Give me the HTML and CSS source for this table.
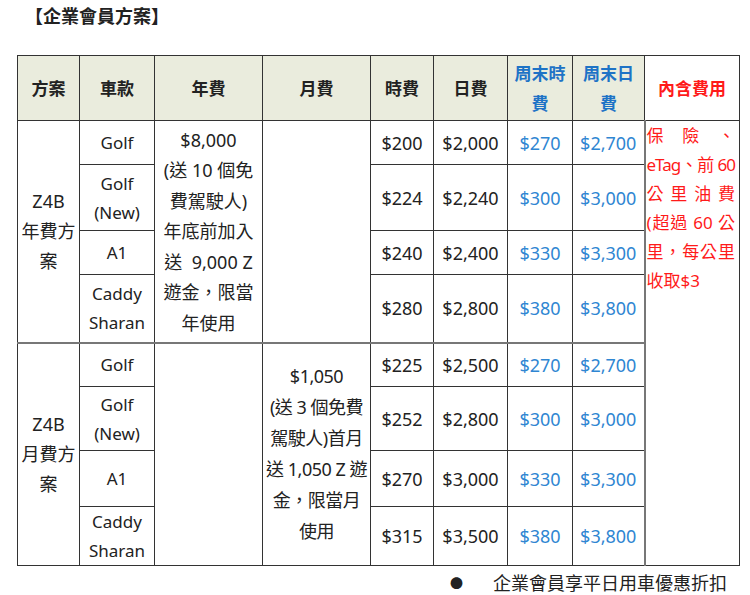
FILE: index.html
```html
<!DOCTYPE html>
<html lang="zh-Hant">
<head>
<meta charset="utf-8">
<link rel="stylesheet" href="styles.css">
</head>
<body>
<div class="page">
  <h1 class="title">【企業會員方案】</h1>
  <table class="plan">
    <colgroup>
      <col class="c1"><col class="c2"><col class="c3"><col class="c4"><col class="c5"><col class="c6"><col class="c7"><col class="c8"><col class="c9">
    </colgroup>
    <thead>
      <tr class="h">
        <th>方案</th><th>車款</th><th>年費</th><th>月費</th><th>時費</th><th>日費</th>
        <th class="blue">周末時<br>費</th><th class="blue">周末日<br>費</th><th class="red white">內含費用</th>
      </tr>
    </thead>
    <tbody>
      <tr class="r1">
        <td rowspan="4" class="plan-name">Z4B<br>年費方<br>案</td>
        <td class="car">Golf</td>
        <td rowspan="4" class="desc">$8,000<br>(送 10 個免<br>費駕駛人)<br>年底前加入<br>送&nbsp; 9,000 Z<br>遊金，限當<br>年使用</td>
        <td rowspan="4"></td>
        <td class="num">$200</td><td class="num">$2,000</td><td class="num blue">$270</td><td class="num blue">$2,700</td>
        <td rowspan="8" class="note">
          <span class="jl">保險、</span>
          <span class="jl tight">eTag、前 60</span>
          <span class="jl">公里油費</span>
          <span class="jl">(超過 60 公</span>
          <span class="jl">里，每公里</span>
          <span class="ll">收取$3</span>
        </td>
      </tr>
      <tr class="r2">
        <td class="car">Golf<br>(New)</td>
        <td class="num">$224</td><td class="num">$2,240</td><td class="num blue">$300</td><td class="num blue">$3,000</td>
      </tr>
      <tr class="r3">
        <td class="car">A1</td>
        <td class="num">$240</td><td class="num">$2,400</td><td class="num blue">$330</td><td class="num blue">$3,300</td>
      </tr>
      <tr class="r4">
        <td class="car">Caddy<br>Sharan</td>
        <td class="num">$280</td><td class="num">$2,800</td><td class="num blue">$380</td><td class="num blue">$3,800</td>
      </tr>
      <tr class="r5 group">
        <td rowspan="4" class="plan-name">Z4B<br>月費方<br>案</td>
        <td class="car">Golf</td>
        <td rowspan="4"></td>
        <td rowspan="4" class="desc month">$1,050<br>(送 3 個免費<br>駕駛人)首月<br>送 1,050 Z 遊<br>金，限當月<br>使用</td>
        <td class="num">$225</td><td class="num">$2,500</td><td class="num blue">$270</td><td class="num blue">$2,700</td>
      </tr>
      <tr class="r6">
        <td class="car">Golf<br>(New)</td>
        <td class="num">$252</td><td class="num">$2,800</td><td class="num blue">$300</td><td class="num blue">$3,000</td>
      </tr>
      <tr class="r7">
        <td class="car">A1</td>
        <td class="num">$270</td><td class="num">$3,000</td><td class="num blue">$330</td><td class="num blue">$3,300</td>
      </tr>
      <tr class="r8">
        <td class="car">Caddy<br>Sharan</td>
        <td class="num">$315</td><td class="num">$3,500</td><td class="num blue">$380</td><td class="num blue">$3,800</td>
      </tr>
    </tbody>
  </table>
  <div class="bullet-row"><span class="dot">●</span><span>企業會員享平日用車優惠折扣</span></div>
</div>
</body>
</html>
```
FILE: styles.css
```css
html, body {
  margin: 0;
  padding: 0;
  background: #fff;
}
body {
  font-family: "Noto Sans", "Noto Sans CJK TC", sans-serif;
  color: #222;
}
.page {
  padding: 0 0 0 17px;
}
.title {
  margin: 0;
  padding: 4px 0 0 8px;
  font-size: 18px;
  line-height: 22px;
  font-weight: bold;
  height: 55px;
  box-sizing: border-box;
  font-family: "Noto Sans CJK TC", sans-serif;
}
.plan {
  border-collapse: collapse;
  table-layout: fixed;
  width: 722px;
  font-size: 18px;
  line-height: 30px;
}
.c1 { width: 62px; }
.c2 { width: 75px; }
.c3 { width: 108px; }
.c4 { width: 108px; }
.c5 { width: 63px; }
.c6 { width: 74px; }
.c7 { width: 65px; }
.c8 { width: 72px; }
.c9 { width: 95px; }
.plan th, .plan td {
  border: 1px solid #333;
  padding: 0;
  text-align: center;
  vertical-align: middle;
}
.plan th {
  background: #eaecdd;
  font-family: "Noto Sans CJK TC", sans-serif;
  font-size: 17px;
  font-weight: bold;
  color: #222;
}
.plan th.white { background: #fff; }
.plan .blue { color: #2f86d2; }
.plan th.blue { color: #1e73c6; }
.plan .red { color: #ff1a1a; }
.h { height: 65px; }
.r1 { height: 44px; }
.r2 { height: 66px; }
.r3 { height: 44px; }
.r4 { height: 68px; }
.r5 { height: 44px; }
.r6 { height: 64px; }
.r7 { height: 56px; }
.r8 { height: 58px; }
.plan .group td { border-top: 2px solid #777; }
.car {
  font-size: 17px;
  line-height: 29px;
}
.plan-name {
  font-size: 18px;
  line-height: 30px;
}
.desc {
  font-size: 18px;
  line-height: 30.5px;
}
.desc.month {
  font-size: 18px;
  line-height: 31px;
  letter-spacing: -0.5px;
}
.num {
  font-size: 18px;
}
.plan td.note {
  vertical-align: top;
  color: #ff1a1a;
  font-size: 17px;
  line-height: 29px;
  padding: 0 4px 0 1px;
  border-left: 2px solid #777;
}
.note .jl {
  display: block;
  text-align: justify;
  text-align-last: justify;
  white-space: nowrap;
}
.note .tight {
  letter-spacing: -1px;
}
.note .ll {
  display: block;
  text-align: left;
}
.bullet-row {
  display: flex;
  align-items: center;
  margin: 6px 0 0 433px;
  font-size: 18px;
  line-height: 22px;
  color: #222;
}
.dot {
  width: 43px;
  font-size: 13px;
}
```
